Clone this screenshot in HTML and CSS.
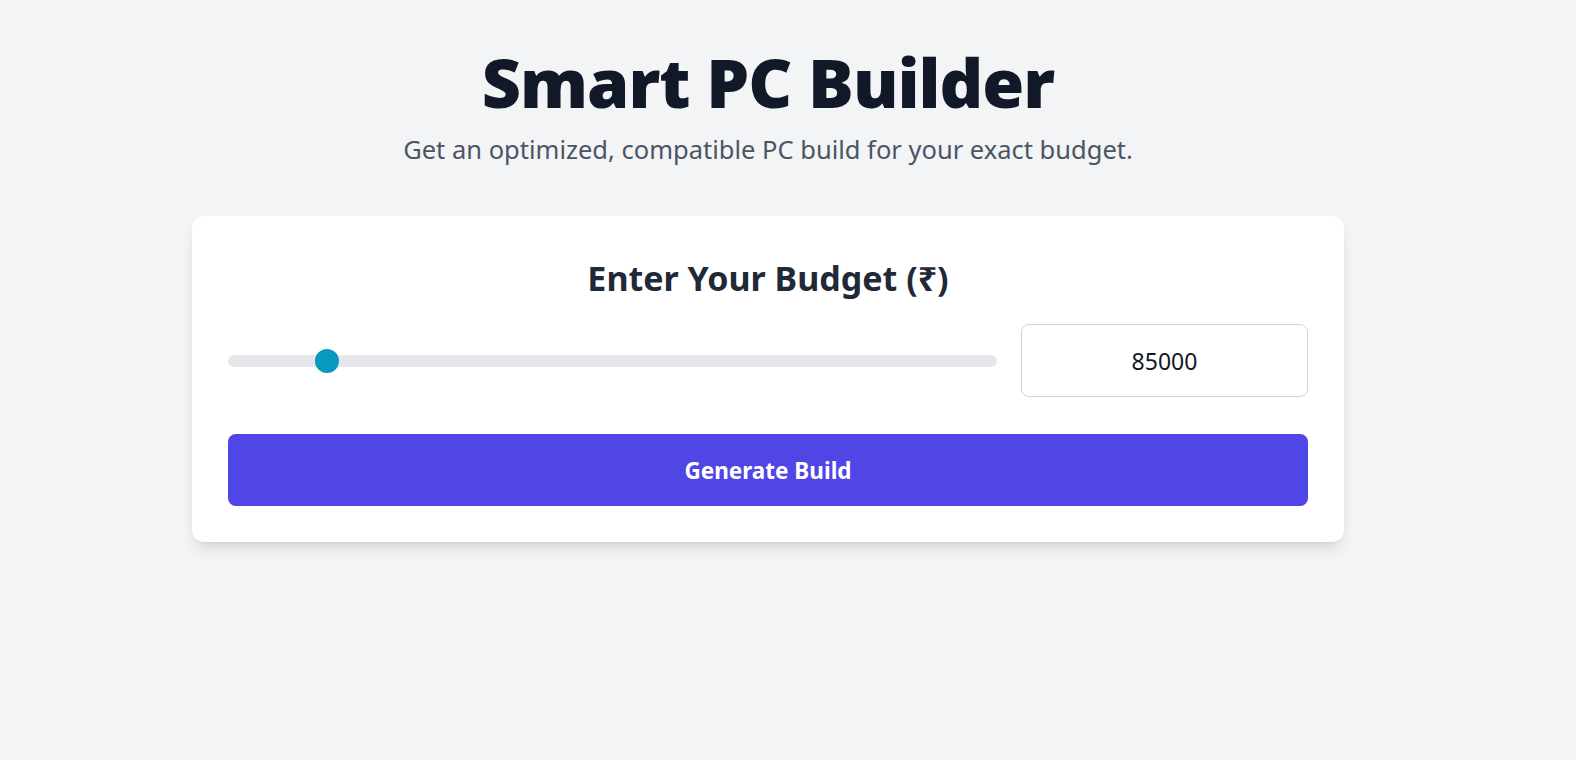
FILE: index.html
```html
<!DOCTYPE html>
<html lang="en">
<head>
<meta charset="utf-8">
<title>Smart PC Builder</title>
<link rel="stylesheet" href="styles.css">
</head>
<body>
<div class="page">
  <header class="hero">
    <h1 class="hero-title">Smart PC Builder</h1>
    <p class="hero-sub">Get an optimized, compatible PC build for your exact budget.</p>
  </header>
  <section class="card">
    <h2 class="card-title">Enter Your Budget (₹)</h2>
    <div class="budget-row">
      <input class="slider" type="range" min="30000" max="500000" step="1000" value="85000">
      <input class="budget-input" type="text" value="85000">
    </div>
    <button class="btn-generate" type="button">Generate Build</button>
  </section>
</div>
</body>
</html>
```
FILE: styles.css
```css
* { box-sizing: border-box; }
html, body { margin: 0; padding: 0; }
body {
  background: #f3f4f6;
  font-family: "Noto Sans", "Open Sans", sans-serif;
  color: #111827;
}
.page {
  max-width: 1536px;
  padding: 40px 16px;
}
.hero { text-align: center; }
.hero-title {
  margin: 0;
  font-size: 68px;
  line-height: 84px;
  font-weight: 900;
  color: #111827;
  letter-spacing: -1px;
}
.hero-sub {
  margin: 9px 0 0;
  font-size: 25.5px;
  line-height: 32px;
  color: #4b5563;
}
.card {
  max-width: 1152px;
  margin: 51px auto 0;
  background: #fff;
  border-radius: 12px;
  padding: 42px 36px 36px;
  box-shadow: 0 10px 15px -3px rgba(0,0,0,0.1), 0 4px 6px -4px rgba(0,0,0,0.1);
}
.card-title {
  margin: 0;
  text-align: center;
  font-size: 34px;
  line-height: 40px;
  font-weight: 700;
  color: #1f2937;
}
.budget-row {
  display: flex;
  align-items: center;
  gap: 24px;
  margin-top: 26px;
}
.slider {
  flex: 1;
  margin: 0;
  height: 24px;
  -webkit-appearance: none;
  appearance: none;
  background: transparent;
}
.slider::-webkit-slider-runnable-track {
  height: 12px;
  border-radius: 6px;
  background: #e5e7eb;
}
.slider::-webkit-slider-thumb {
  -webkit-appearance: none;
  appearance: none;
  width: 24px;
  height: 24px;
  margin-top: -6px;
  border-radius: 50%;
  background: #0899bf;
  border: none;
}
.budget-input {
  width: 287px;
  height: 73px;
  border: 1px solid #d1d5db;
  border-radius: 8px;
  text-align: center;
  font-family: inherit;
  font-size: 23px;
  color: #111827;
  background: #fff;
  outline: none;
}
.btn-generate {
  display: block;
  width: 100%;
  height: 72px;
  margin-top: 37px;
  border: none;
  border-radius: 8px;
  background: #4f46e5;
  color: #fff;
  font-family: inherit;
  font-size: 22.5px;
  font-weight: 700;
  cursor: pointer;
}
```
